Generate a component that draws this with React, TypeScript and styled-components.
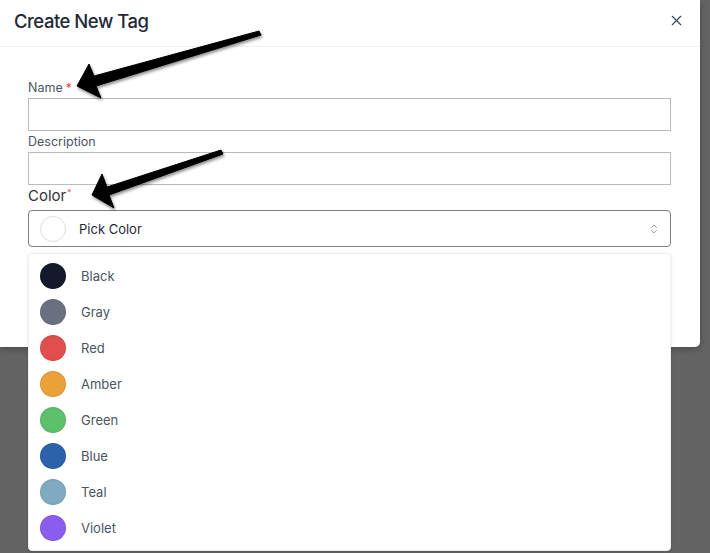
import React from "react";
import styled, { createGlobalStyle } from "styled-components";
import { X, ChevronsUpDown } from "lucide-react";

const Global = createGlobalStyle`
  html, body { margin: 0; padding: 0; }
  body {
    background: #636363;
    font-family: Inter, "Noto Sans", "Liberation Sans", sans-serif;
    -webkit-font-smoothing: antialiased;
  }
`;

const Page = styled.div`
  position: relative;
  width: 710px;
  height: 553px;
  overflow: hidden;
  background: #636363;
`;

const Modal = styled.div`
  width: 700px;
  background: #ffffff;
  border-bottom-right-radius: 5px;
  box-shadow: 0 2px 6px rgba(0, 0, 0, 0.25);
`;

const Header = styled.div`
  box-sizing: border-box;
  height: 47px;
  display: flex;
  align-items: center;
  justify-content: space-between;
  padding: 0 15px 5px 14px;
  border-bottom: 1px solid #f1f1f3;
`;

const Title = styled.h2`
  margin: 0;
  font-size: 18.5px;
  font-weight: 500;
  color: #1f2937;
  letter-spacing: -0.5px;
`;

const CloseButton = styled.button`
  border: none;
  background: none;
  padding: 0;
  display: flex;
  color: #374151;
`;

const Body = styled.div`
  padding: 33px 29px 100px 28px;
  display: flex;
  flex-direction: column;
`;

const Label = styled.label<{ $big?: boolean }>`
  display: block;
  font-size: ${(p) => (p.$big ? "15px" : "12.5px")};
  line-height: ${(p) => (p.$big ? "20px" : "16px")};
  color: ${(p) => (p.$big ? "#333338" : "#4b5563")};
  margin: ${(p) => (p.$big ? "-2px 0 4px" : "0 0 2px")};
`;

const Req = styled.span<{ $sup?: boolean }>`
  color: #e53e3e;
  margin-left: ${(p) => (p.$sup ? "1px" : "3px")};
  font-size: ${(p) => (p.$sup ? "8px" : "12px")};
  vertical-align: ${(p) => (p.$sup ? "top" : "baseline")};
  line-height: ${(p) => (p.$sup ? "12px" : "inherit")};
`;

const Input = styled.input`
  box-sizing: border-box;
  width: 100%;
  height: 33px;
  border: 1px solid #b9b9c1;
  border-radius: 0;
  margin: 0 0 3px;
  padding: 0 10px;
  font: inherit;
  outline: none;
`;

const SelectWrap = styled.div`
  position: relative;
`;

const SelectBox = styled.div`
  box-sizing: border-box;
  height: 37px;
  border: 1px solid #7d7d82;
  border-radius: 4px;
  display: flex;
  align-items: center;
  padding: 0 10px 0 11px;
  gap: 13px;
  color: #1f2937;
  font-size: 13px;
`;

const Swatch = styled.span<{ $color: string }>`
  flex: none;
  width: 26px;
  height: 26px;
  border-radius: 50%;
  box-sizing: border-box;
  background: ${(p) => p.$color};
  border: 1px solid
    ${(p) => (p.$color === "#ffffff" ? "#dedede" : "rgba(0,0,0,0.08)")};
`;

const SelectText = styled.span`
  flex: 1;
`;

const Chevron = styled.span`
  display: flex;
  color: #8a8a90;
`;

const Dropdown = styled.ul`
  position: absolute;
  top: calc(100% + 6px);
  left: 0;
  right: 0;
  margin: 0;
  padding: 4px 0;
  list-style: none;
  background: #ffffff;
  border: 1px solid #f0f0f2;
  border-radius: 4px;
  box-shadow: 0 1px 3px rgba(0, 0, 0, 0.12);
  z-index: 2;
`;

const Option = styled.li`
  height: 36px;
  display: flex;
  align-items: center;
  gap: 15px;
  padding: 0 11px;
  font-size: 13px;
  color: #4b5563;
`;

const ArrowLayer = styled.svg`
  position: absolute;
  left: 0;
  top: 0;
  width: 710px;
  height: 553px;
  pointer-events: none;
  z-index: 5;
  filter: drop-shadow(1px 2px 1.5px rgba(0, 0, 0, 0.45));
`;

const colors: { name: string; color: string }[] = [
  { name: "Black", color: "#141a2b" },
  { name: "Gray", color: "#6b7080" },
  { name: "Red", color: "#e04e4e" },
  { name: "Amber", color: "#eba13a" },
  { name: "Green", color: "#5dc16c" },
  { name: "Blue", color: "#2b62ab" },
  { name: "Teal", color: "#7eaac2" },
  { name: "Violet", color: "#8a5cf0" },
];

export default function App() {
  return (
    <Page>
      <Global />
      <Modal>
        <Header>
          <Title>Create New Tag</Title>
          <CloseButton aria-label="Close">
            <X size={17} strokeWidth={1.6} />
          </CloseButton>
        </Header>
        <Body>
          <Label>
            Name<Req>*</Req>
          </Label>
          <Input />
          <Label>Description</Label>
          <Input />
          <Label $big>
            Color<Req $sup>*</Req>
          </Label>
          <SelectWrap>
            <SelectBox>
              <Swatch $color="#ffffff" />
              <SelectText>Pick Color</SelectText>
              <Chevron>
                <ChevronsUpDown size={12} strokeWidth={1.6} />
              </Chevron>
            </SelectBox>
            <Dropdown>
              {colors.map((c) => (
                <Option key={c.name}>
                  <Swatch $color={c.color} />
                  {c.name}
                </Option>
              ))}
            </Dropdown>
          </SelectWrap>
        </Body>
      </Modal>
      <ArrowLayer viewBox="0 0 710 553">
        <polygon
          points="259,31 94,76 89,64 77,86 101,98 96,86 261,35"
          fill="#000"
          strokeLinejoin="round"
          stroke="#000"
          strokeWidth="1"
        />
        <polygon
          points="221,150 107,187 102,174 92,195 114,208 109,195 223,154"
          fill="#000"
          strokeLinejoin="round"
          stroke="#000"
          strokeWidth="1"
        />
      </ArrowLayer>
    </Page>
  );
}
